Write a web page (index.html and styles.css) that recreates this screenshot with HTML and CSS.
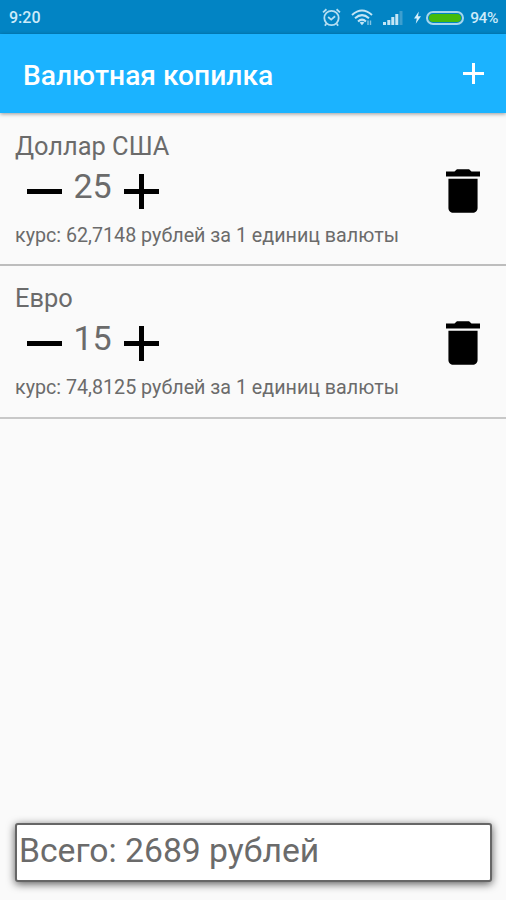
FILE: index.html
```
<!DOCTYPE html>
<html lang="ru">
<head>
  <meta charset="UTF-8">
  <meta name="viewport" content="width=device-width, initial-scale=1.0">
  <title>Валютная копилка</title>
  <link rel="stylesheet" href="styles.css">
</head>
<body>

  <div class="status-bar">
    <span class="time">9:20</span>
    <div class="status-icons">
      <svg class="alarm" viewBox="0 0 18 18" fill="none" stroke="#b5def2" stroke-width="1.7">
        <circle cx="9" cy="9.5" r="6.8"/>
        <path d="M1 4.2L4.2 1.2M17 4.2L13.8 1.2M5.8 8.5L8.7 11L12.4 7.8M4 15L2.8 16.8M14 15L15.2 16.8"/>
      </svg>
      <svg class="wifi" viewBox="0 0 22 17" fill="none" stroke="#c4e5f5" stroke-width="2">
        <path d="M1 6Q11 -3 21 6M4 9.3Q11 3 18 9.3M7 12.4Q11 8.8 15 12.4"/>
        <path d="M8.6 13.6Q11 11.8 13.4 13.6L11 16.3Z" fill="#c4e5f5" stroke="none"/>
        <path d="M17 11.5V16M19.5 11.5V16" stroke="#83c4e4" stroke-width="1.4"/>
      </svg>
      <svg class="signal" viewBox="0 0 20 14" fill="#c4e5f5">
        <path d="M0 11h3v3H0zM4.3 9h3v5h-3zM8.3 6h3v8h-3zM12.3 3h3v11h-3z"/>
        <path d="M16.5 0h3v14h-3z" fill="#3d9fcf"/>
      </svg>
      <svg class="bolt" viewBox="0 0 8 14" fill="#d6effa">
        <path d="M5.5 0L0 8h3.2L2 14l6-8.3H4.6z"/>
      </svg>
      <div class="battery"></div>
      <span class="percent">94%</span>
    </div>
  </div>

  <div class="app-bar">
    <h1>Валютная копилка</h1>
    <svg class="add" viewBox="0 0 21 21" stroke="#fff" stroke-width="3">
      <path d="M10.5 0V21M0 10.5H21"/>
    </svg>
  </div>

  <div class="list">
    <div class="row">
      <div class="info">
        <div class="name">Доллар США</div>
        <div class="counter">
          <svg viewBox="0 0 14 14"><path d="M0 6h14v2H0z"/></svg>
          <span class="count">25</span>
          <svg viewBox="0 0 14 14"><path d="M0 6h6V0h2v6h6v2H8v6H6V8H0z"/></svg>
        </div>
        <div class="rate">курс: 62,7148 рублей за 1 единиц валюты</div>
      </div>
      <svg class="delete" viewBox="5 3 14 18">
        <path d="M6 19c0 1.1.9 2 2 2h8c1.1 0 2-.9 2-2V7H6v12zM19 4h-3.5l-1-1h-5l-1 1H5v2h14V4z"/>
      </svg>
    </div>

    <div class="row">
      <div class="info">
        <div class="name">Евро</div>
        <div class="counter">
          <svg viewBox="0 0 14 14"><path d="M0 6h14v2H0z"/></svg>
          <span class="count">15</span>
          <svg viewBox="0 0 14 14"><path d="M0 6h6V0h2v6h6v2H8v6H6V8H0z"/></svg>
        </div>
        <div class="rate">курс: 74,8125 рублей за 1 единиц валюты</div>
      </div>
      <svg class="delete" viewBox="5 3 14 18">
        <path d="M6 19c0 1.1.9 2 2 2h8c1.1 0 2-.9 2-2V7H6v12zM19 4h-3.5l-1-1h-5l-1 1H5v2h14V4z"/>
      </svg>
    </div>
  </div>

  <div class="total">Всего: 2689 рублей</div>

</body>
</html>
```
FILE: styles.css
```
* {
  box-sizing: border-box;
}
body {
  margin: 0;
  height: 900px;
  display: flex;
  flex-direction: column;
  overflow: hidden;
  background-color: #fafafa;
  color: #6b6b6b;
  font-family: Roboto, "Liberation Sans", sans-serif;
}
svg {
  display: block;
  flex: none;
}

/* status bar */
.status-bar {
  height: 34px;
  padding: 1px 8px 0 9px;
  display: flex;
  align-items: center;
  justify-content: space-between;
  background-color: #0284c4;
  color: #cdebf9;
  font-size: 16px;
  font-weight: 500;
}
.status-icons {
  display: flex;
  align-items: center;
}
.alarm {
  width: 19px;
  height: 19px;
  margin-right: 10px;
}
.wifi {
  width: 22px;
  height: 17px;
  margin-right: 10px;
}
.signal {
  width: 20px;
  height: 14px;
  margin-right: 11px;
}
.bolt {
  width: 7px;
  height: 13px;
  margin-right: 5px;
}
.battery {
  width: 38px;
  height: 14px;
  margin-right: 6px;
  padding: 1px;
  border: 2px solid #a5d6ee;
  border-radius: 7px;
  background-color: #44bb0c;
  background-clip: content-box;
}
.percent {
  font-size: 15.5px;
  letter-spacing: -0.4px;
}

/* title bar */
.app-bar {
  height: 79px;
  padding: 0 22px 0 23px;
  display: flex;
  align-items: center;
  justify-content: space-between;
  background-color: #1bb3ff;
  box-shadow: 0 1px 4px rgba(0, 0, 0, 0.4);
}
.app-bar h1 {
  margin: 3px 0 0;
  color: #fff;
  font-size: 28.2px;
  font-weight: 500;
}
.add {
  width: 21px;
  height: 21px;
}

/* currencies */
.list {
  flex: 1;
}
.row {
  height: 153px;
  padding: 17px 26px 0 15px;
  display: flex;
  justify-content: space-between;
  border-bottom: 2px solid #bdbdbd;
}
.row + .row {
  padding-top: 16px;
  border-color: #c8c8c8;
}
.name {
  font-size: 25.4px;
  line-height: 32px;
}
.counter {
  height: 50px;
  padding-left: 11.5px;
  display: flex;
  align-items: flex-start;
}
.counter svg {
  width: 35px;
  height: 35px;
  margin-top: 12px;
}
.count {
  width: 62px;
  text-align: center;
  font-size: 34px;
  line-height: 48px;
}
.rate {
  font-size: 19.7px;
  line-height: 48px;
}
.delete {
  width: 34px;
  height: 44px;
  margin-top: 39px;
}

.total {
  height: 59px;
  margin: 0 14px 18px 15px;
  padding-left: 2px;
  border: 2px solid #666;
  border-radius: 3px;
  background-color: #fff;
  box-shadow: 0 2px 9px rgba(0, 0, 0, 0.65);
  font-size: 33.7px;
  line-height: 52px;
}
```
